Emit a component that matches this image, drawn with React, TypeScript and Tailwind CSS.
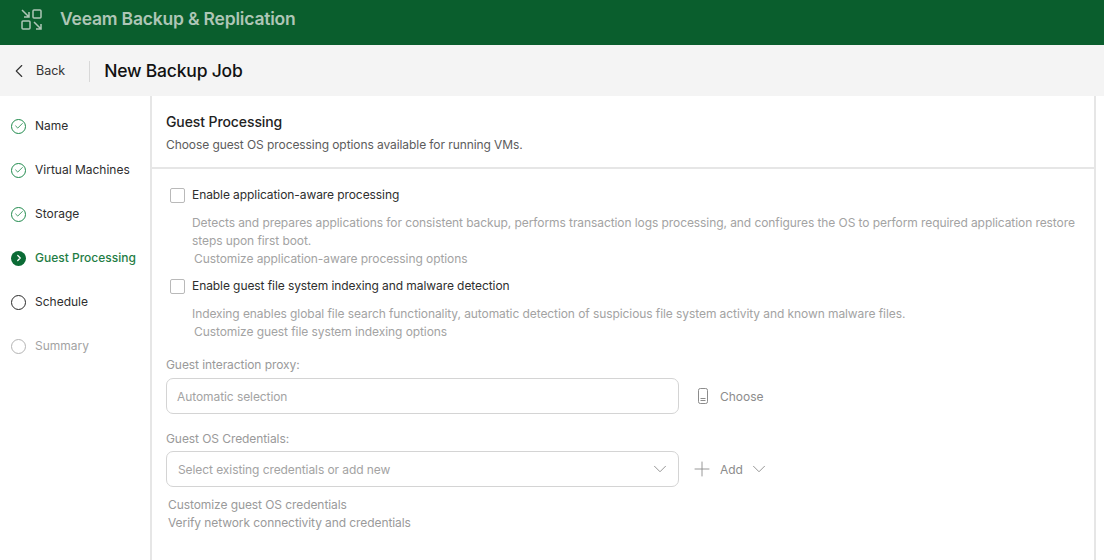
import { Check, ChevronDown, ChevronLeft, ChevronRight, Plus } from "lucide-react";

const steps = [
  { name: "Name", state: "done" },
  { name: "Virtual Machines", state: "done" },
  { name: "Storage", state: "done" },
  { name: "Guest Processing", state: "active" },
  { name: "Schedule", state: "next" },
  { name: "Summary", state: "off" },
];

function StepIcon({ state }: { state: string }) {
  if (state === "done") {
    return (
      <span className="flex h-[15px] w-[15px] items-center justify-center rounded-full border-[1.25px] border-[#1f8a4c]">
        <Check className="h-[10px] w-[10px] text-[#1f8a4c]" strokeWidth={2} />
      </span>
    );
  }
  if (state === "active") {
    return (
      <span className="flex h-[15px] w-[15px] items-center justify-center rounded-full bg-[#0b6b35]">
        <ChevronRight className="h-[10px] w-[10px] text-white" strokeWidth={3} />
      </span>
    );
  }
  return (
    <span
      className={
        state === "next"
          ? "h-[15px] w-[15px] rounded-full border-[1.5px] border-[#2a2a2a]"
          : "h-[15px] w-[15px] rounded-full border-[1.5px] border-[#b4b4b4]"
      }
    />
  );
}

function LogoIcon() {
  return (
    <svg width="21" height="21" viewBox="0 0 21 21" fill="none" stroke="#aec6b6" strokeWidth="1.5">
      <path d="M1 1 L8 8 M8 3 V8 H3" />
      <rect x="12" y="1" width="8" height="8" rx="1" />
      <rect x="1" y="12" width="8" height="8" rx="1" />
      <path d="M13 13 L20 20 M20 15 V20 H15" />
    </svg>
  );
}

function ProxyIcon() {
  return (
    <svg width="10" height="16" viewBox="0 0 10 16" fill="none" stroke="#8c8c8c" strokeWidth="1">
      <rect x="0.5" y="0.5" width="9" height="15" rx="1.8" />
      <path d="M2.5 10.5 H7.5 M2.5 12.5 H7.5" />
    </svg>
  );
}

function Option({ label, text, link, gap }: { label: string; text: string; link: string; gap: string }) {
  return (
    <div>
      <label className="flex h-[18px] items-center">
        <span className="h-[15px] w-[15px] rounded-[2px] border border-[#b9b9b9] bg-white" />
        <span className="ml-[7px] text-[#2e2e2e]">{label}</span>
      </label>
      <div className={gap + " pl-[22px] leading-[18px] text-[#a3a3a3]"}>
        <p>{text}</p>
        <p className="pl-[2px]">{link}</p>
      </div>
    </div>
  );
}

export default function App() {
  return (
    <div className="flex h-[560px] w-[1104px] flex-col overflow-hidden bg-white font-['Inter',sans-serif] text-[12px] tracking-[-0.08px]">
      <header className="flex h-[45px] items-center bg-[#0a5e2d] pb-[6px] pl-[21px]">
        <LogoIcon />
        <span className="ml-[18px] text-[17.5px] font-semibold tracking-[-0.2px] text-[#aec6b6]">
          Veeam Backup &amp; Replication
        </span>
      </header>
      <div className="flex h-[51px] items-center bg-[#f4f4f4] pl-[8px] pt-[1px]">
        <ChevronLeft className="h-[22px] w-[22px] text-[#333]" strokeWidth={1.2} />
        <span className="ml-[6px] text-[12.5px] tracking-normal text-[#333]">Back</span>
        <span className="ml-[24px] h-[21px] w-px bg-[#d8d8d8]" />
        <h1 className="ml-[14px] text-[17.5px] font-medium tracking-[-0.2px] text-[#111]">New Backup Job</h1>
      </div>
      <div className="flex min-h-0 flex-1">
        <nav className="flex w-[152px] shrink-0 flex-col gap-[22px] border-r-2 border-[#e6e6e6] pl-[11px] pt-[19px]">
          {steps.map((s) => (
            <div key={s.name} className="flex h-[22px] items-center tracking-normal">
              <StepIcon state={s.state} />
              <span
                className={
                  s.state === "active"
                    ? "ml-[9px] font-medium text-[#1f7d45]"
                    : s.state === "off"
                      ? "ml-[9px] text-[#a3a3a3]"
                      : "ml-[9px] text-[#2e2e2e]"
                }
              >
                {s.name}
              </span>
            </div>
          ))}
        </nav>
        <main className="w-[944px] shrink-0 border-r-2 border-[#e6e6e6]">
          <div className="h-[73px] border-b-2 border-[#e6e6e6] pl-[14px] pt-[17px]">
            <h2 className="text-[14px] font-medium leading-[18px] tracking-[-0.1px] text-[#222]">Guest Processing</h2>
            <p className="mt-[5px] leading-[18px] text-[#5c5c5c]">
              Choose guest OS processing options available for running VMs.
            </p>
          </div>
          <div className="pl-[18px] pr-[16px] pt-[17px]">
            <div className="flex flex-col gap-[9px]">
              <Option
                gap="mt-[10px]"
                label="Enable application-aware processing"
                text="Detects and prepares applications for consistent backup, performs transaction logs processing, and configures the OS to perform required application restore steps upon first boot."
                link="Customize application-aware processing options"
              />
              <Option
                gap="mt-[10px]"
                label="Enable guest file system indexing and malware detection"
                text="Indexing enables global file search functionality, automatic detection of suspicious file system activity and known malware files."
                link="Customize guest file system indexing options"
              />
            </div>
          </div>
          <div className="pl-[14px] pt-[15px] text-[#a3a3a3]">
            <p className="leading-[18px] text-[#9a9a9a]">Guest interaction proxy:</p>
            <div className="mt-[4px] flex items-center">
              <div className="flex h-[36px] w-[513px] items-center rounded-[7px] border border-[#d4d4d4] pl-[10px] pt-[1px]">
                Automatic selection
              </div>
              <span className="ml-[19px]"><ProxyIcon /></span>
              <span className="ml-[12px] pt-[1px] tracking-normal text-[#8c8c8c]">Choose</span>
            </div>
            <p className="mt-[16px] leading-[18px] text-[#9a9a9a]">Guest OS Credentials:</p>
            <div className="mt-[3px] flex items-center">
              <div className="flex h-[36px] w-[513px] items-center justify-between rounded-[7px] border border-[#d4d4d4] pl-[11px] pr-[7px]">
                <span className="pt-[1px]">Select existing credentials or add new</span>
                <ChevronDown className="h-[22px] w-[22px] text-[#8c8c8c]" strokeWidth={1} />
              </div>
              <Plus className="ml-[11px] h-[24px] w-[24px] text-[#8c8c8c]" strokeWidth={0.9} />
              <span className="ml-[6px] pt-[1px] text-[#8c8c8c]">Add</span>
              <ChevronDown className="ml-[5px] h-[22px] w-[22px] text-[#8c8c8c]" strokeWidth={1} />
            </div>
            <div className="mt-[9px] pl-[2px] leading-[18px] text-[#9a9a9a]">
              <p>Customize guest OS credentials</p>
              <p>Verify network connectivity and credentials</p>
            </div>
          </div>
        </main>
      </div>
    </div>
  );
}
